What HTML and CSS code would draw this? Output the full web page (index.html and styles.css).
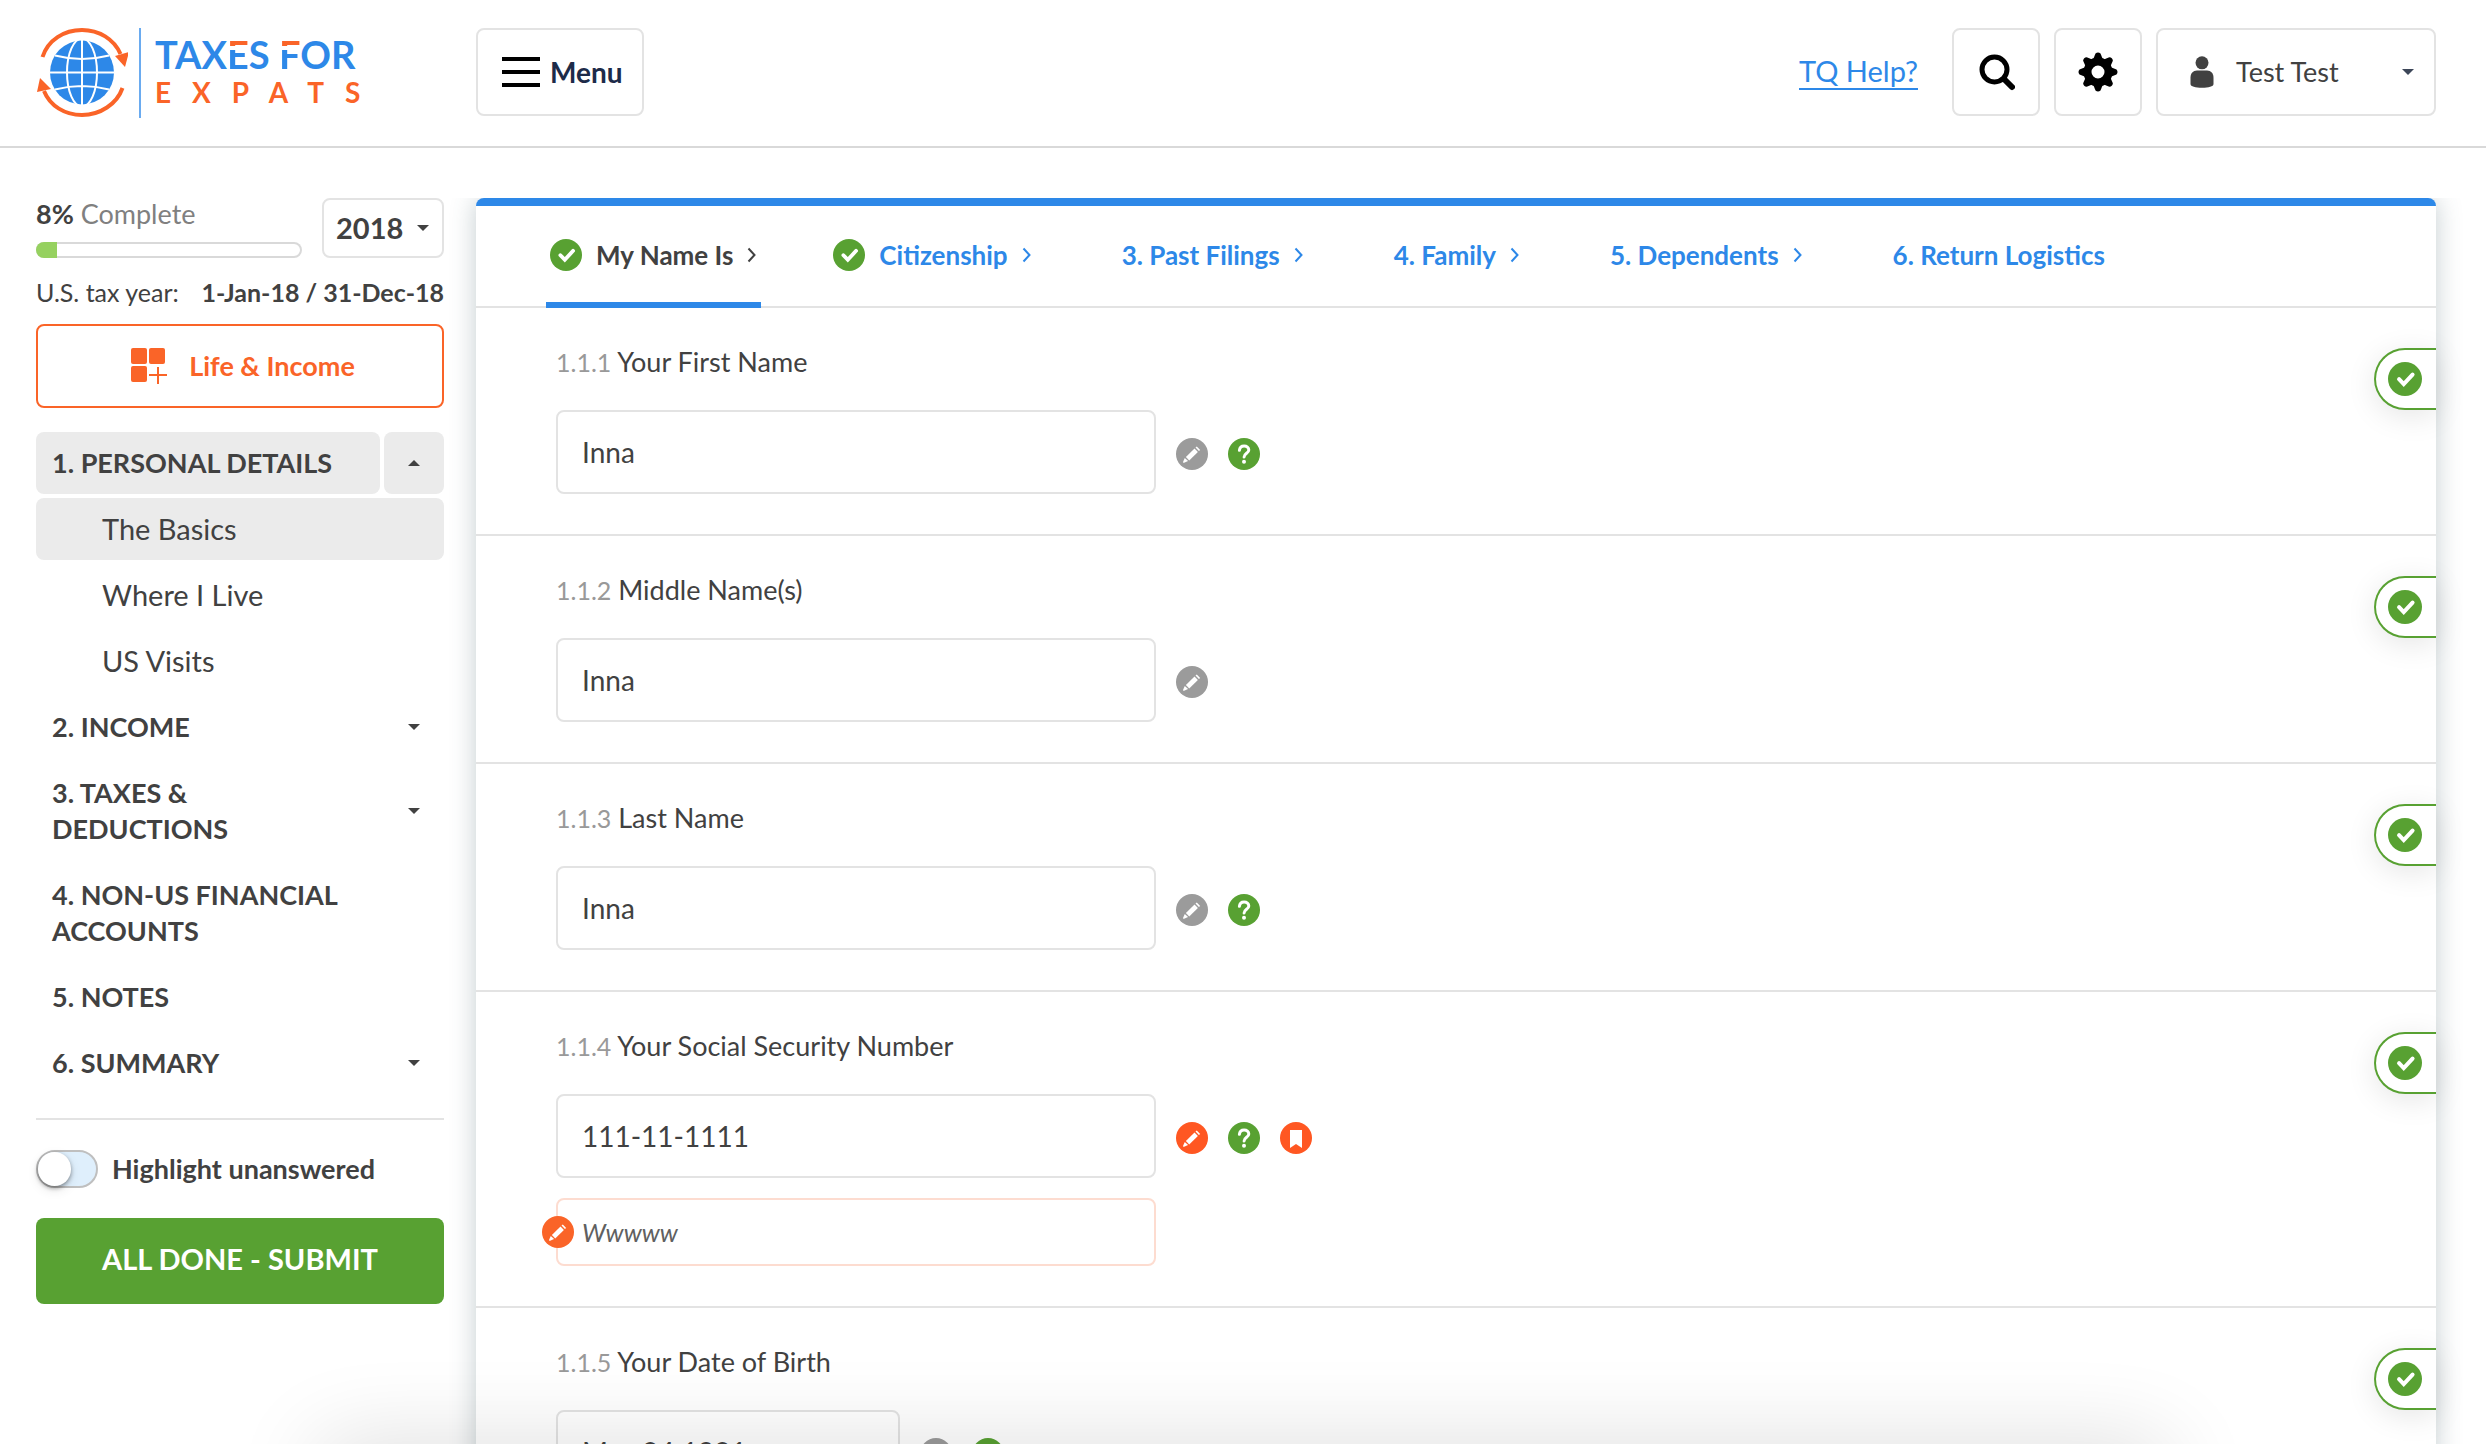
FILE: index.html
```html
<!DOCTYPE html>
<html lang="en">
<head>
<meta charset="utf-8">
<title>Taxes for Expats - The Basics</title>
<meta name="viewport" content="width=device-width, initial-scale=1">
<link rel="stylesheet" href="styles.css">
</head>
<body>
<svg class="sprite" aria-hidden="true">
  <symbol id="i-check" viewBox="0 0 32 32"><circle cx="16" cy="16" r="16" fill="#58a132"/><path d="M10.400 16.200l4.400 4.600 8.300-9" fill="none" stroke="#fff" stroke-width="3.800" stroke-linecap="round" stroke-linejoin="miter"/></symbol>
  <symbol id="i-pencil" viewBox="0 0 32 32"><circle cx="16" cy="16" r="16" fill="currentColor"/><g fill="#fff"><path d="M18.500 10.600l3.400 3.400-8.700 8.400-3.300-3.400z"/><path d="M19.500 9.600l1.300-1.200 3.400 3.500-1.300 1.200z"/><path d="M8.800 19.900l3.300 3.200-4 1.700c-.8.200-1.200-.3-1-1z"/></g></symbol>
  <symbol id="i-help" viewBox="0 0 32 32"><circle cx="16" cy="16" r="16" fill="#58a132"/><path d="M11.400 12.300c.3-2.900 2.200-4.300 4.700-4.300 2.700 0 4.700 1.500 4.700 4 0 3.300-4.500 3.300-4.700 7" fill="none" stroke="#fff" stroke-width="3" stroke-linecap="round"/><circle cx="16" cy="23.700" r="2" fill="#fff"/></symbol>
  <symbol id="i-bookmark" viewBox="0 0 32 32"><circle cx="16" cy="16" r="16" fill="currentColor"/><path d="M10 8h12v18l-6-4-6 4z" fill="#fff"/></symbol>
  <symbol id="i-next" viewBox="0 0 10 16"><path d="M1.500 1.500l6 6.500-6 6.500" fill="none" stroke="currentColor" stroke-width="2"/></symbol>
</svg>

<header class="topbar">
  <a class="logo" href="#" aria-label="Taxes for Expats">
    <svg class="logo-mark" viewBox="0 0 92 90" aria-hidden="true">
      <circle cx="46" cy="44.500" r="32" fill="#2d88e8"/>
      <g fill="none" stroke="#fff" stroke-width="2">
        <path d="M46 12v65M14 44.500h64M19 27.500q27 7 54 0M19 61.500q27-7 54 0"/>
        <ellipse cx="46" cy="44.500" rx="15" ry="34"/>
      </g>
      <g fill="none" stroke="#fa6428" stroke-width="4">
        <path d="M6.500 29C12 12 28 2 46 2c17 0 32 9 38.500 24"/>
        <path d="M86.500 60C81 76 64 87 46 87 29 87 14 78 8 63"/>
      </g>
      <path d="M79 28l14-4-4 15z" fill="#fa6428"/>
      <path d="M1 64l14-3-11-11z" fill="#fa6428"/>
    </svg>
    <span class="logo-text">
      <span class="logo-top">TAX<span class="cut">E</span>S <span class="cut">F</span>OR</span>
      <span class="logo-bottom">EXPATS</span>
    </span>
  </a>
  <button class="box-btn menu-btn" type="button">
    <svg width="38" height="30" viewBox="0 0 38 30" aria-hidden="true"><path d="M0 2h38M0 15h38M0 28h38" stroke="#000" stroke-width="4"/></svg>
    Menu
  </button>
  <nav class="tools" aria-label="Account">
    <a class="help-link" href="#">TQ Help?</a>
    <button class="box-btn icon-btn" type="button" aria-label="Search">
      <svg width="38" height="38" viewBox="-2 -1 38 38" aria-hidden="true"><circle cx="15.500" cy="15.500" r="12.500" fill="none" stroke="#000" stroke-width="5"/><path d="M25 25l8 8" stroke="#000" stroke-width="6" stroke-linecap="round"/></svg>
    </button>
    <button class="box-btn icon-btn" type="button" aria-label="Settings">
      <svg width="40" height="40" viewBox="0 0 40 40" aria-hidden="true"><g fill="#000"><g id="teeth"><path id="t" d="M14.500 9L17.500 1.500Q20-.5 22.500 1.500L25.500 9z"/><use href="#t" transform="rotate(45 20 20)"/><use href="#t" transform="rotate(90 20 20)"/><use href="#t" transform="rotate(135 20 20)"/></g><use href="#teeth" transform="rotate(180 20 20)"/></g><circle cx="20" cy="20" r="10.500" fill="none" stroke="#000" stroke-width="8"/></svg>
    </button>
    <button class="box-btn user-btn" type="button">
      <svg width="24" height="32" viewBox="0 0 24 32" aria-hidden="true"><g fill="#414141"><circle cx="12" cy="6.800" r="6.500"/><path d="M7 14.500h10c4 0 6.500 3 6.500 7V28c0 2.500-5 3.800-11.500 3.800S.5 30.500.5 28v-6.500c0-4 2.500-7 6.500-7z"/></g></svg>
      <span>Test Test</span>
      <i class="caret"></i>
    </button>
  </nav>
</header>

<div class="shell">
  <aside class="sidebar">
    <div class="status">
      <div class="progress-block">
        <div class="progress-label"><b>8%</b> Complete</div>
        <div class="progress" role="progressbar" aria-valuenow="8" aria-valuemin="0" aria-valuemax="100" aria-label="Complete"><div class="progress-fill" style="width: 8%"></div></div>
      </div>
      <div class="year">
        <select aria-label="Tax year"><option>2018</option></select>
        <i class="caret"></i>
      </div>
    </div>
    <p class="tax-year"><span>U.S. tax year:</span><b>1-Jan-18 / 31-Dec-18</b></p>
    <button class="life-btn" type="button">
      <svg width="36" height="36" viewBox="0 0 36 36" aria-hidden="true"><g fill="#fa6428"><rect width="16" height="16" rx="2"/><rect x="18" width="16" height="16" rx="2"/><rect y="18" width="16" height="16" rx="2"/></g><path d="M18 27h18M27 19v17" stroke="#fa6428" stroke-width="2"/></svg>
      Life &amp; Income
    </button>
    <nav class="menu" aria-label="Sections">
      <div class="menu-row open"><a href="#">1. PERSONAL DETAILS</a><button type="button" aria-label="Collapse"><i class="caret up"></i></button></div>
      <a class="sub current" href="#">The Basics</a>
      <a class="sub" href="#">Where I Live</a>
      <a class="sub" href="#">US Visits</a>
      <div class="menu-row"><a href="#">2. INCOME</a><button type="button" aria-label="Expand"><i class="caret"></i></button></div>
      <div class="menu-row"><a href="#">3. TAXES &amp;<br>DEDUCTIONS</a><button type="button" aria-label="Expand"><i class="caret"></i></button></div>
      <div class="menu-row"><a href="#">4. NON-US FINANCIAL<br>ACCOUNTS</a></div>
      <div class="menu-row"><a href="#">5. NOTES</a></div>
      <div class="menu-row"><a href="#">6. SUMMARY</a><button type="button" aria-label="Expand"><i class="caret"></i></button></div>
    </nav>
    <label class="switch"><input type="checkbox">Highlight unanswered</label>
    <button class="submit" type="button">ALL DONE - SUBMIT</button>
  </aside>

  <main class="scroller">
    <div class="panel">
      <nav class="tabs" aria-label="Steps">
        <a class="tab active" href="#"><svg class="dot"><use href="#i-check"/></svg>My Name Is<svg class="next"><use href="#i-next"/></svg></a>
        <a class="tab answered" href="#"><svg class="dot"><use href="#i-check"/></svg>Citizenship<svg class="next"><use href="#i-next"/></svg></a>
        <a class="tab" href="#">3. Past Filings<svg class="next"><use href="#i-next"/></svg></a>
        <a class="tab" href="#">4. Family<svg class="next"><use href="#i-next"/></svg></a>
        <a class="tab" href="#">5. Dependents<svg class="next"><use href="#i-next"/></svg></a>
        <a class="tab" href="#">6. Return Logistics</a>
      </nav>

      <section class="question">
        <label for="first"><span>1.1.1</span> Your First Name</label>
        <div class="answer">
          <input id="first" type="text" value="Inna">
          <button class="dot-btn" type="button" aria-label="Add note"><svg class="dot"><use href="#i-pencil"/></svg></button>
          <button class="dot-btn" type="button" aria-label="Help"><svg class="dot"><use href="#i-help"/></svg></button>
        </div>
        <div class="done"><svg><use href="#i-check"/></svg></div>
      </section>

      <section class="question">
        <label for="middle"><span>1.1.2</span> Middle Name(s)</label>
        <div class="answer">
          <input id="middle" type="text" value="Inna">
          <button class="dot-btn" type="button" aria-label="Add note"><svg class="dot"><use href="#i-pencil"/></svg></button>
        </div>
        <div class="done"><svg><use href="#i-check"/></svg></div>
      </section>

      <section class="question">
        <label for="last"><span>1.1.3</span> Last Name</label>
        <div class="answer">
          <input id="last" type="text" value="Inna">
          <button class="dot-btn" type="button" aria-label="Add note"><svg class="dot"><use href="#i-pencil"/></svg></button>
          <button class="dot-btn" type="button" aria-label="Help"><svg class="dot"><use href="#i-help"/></svg></button>
        </div>
        <div class="done"><svg><use href="#i-check"/></svg></div>
      </section>

      <section class="question">
        <label for="ssn"><span>1.1.4</span> Your Social Security Number</label>
        <div class="answer">
          <input id="ssn" type="text" value="111-11-1111">
          <button class="dot-btn hot" type="button" aria-label="Edit note"><svg class="dot"><use href="#i-pencil"/></svg></button>
          <button class="dot-btn" type="button" aria-label="Help"><svg class="dot"><use href="#i-help"/></svg></button>
          <button class="dot-btn hot" type="button" aria-label="Bookmark"><svg class="dot"><use href="#i-bookmark"/></svg></button>
        </div>
        <div class="note"><svg class="dot"><use href="#i-pencil"/></svg>Wwwww</div>
        <div class="done"><svg><use href="#i-check"/></svg></div>
      </section>

      <section class="question">
        <label for="dob"><span>1.1.5</span> Your Date of Birth</label>
        <div class="answer">
          <input id="dob" class="short" type="text" value="May 24 1981">
          <button class="dot-btn" type="button" aria-label="Add note"><svg class="dot"><use href="#i-pencil"/></svg></button>
          <button class="dot-btn" type="button" aria-label="Help"><svg class="dot"><use href="#i-help"/></svg></button>
        </div>
        <div class="done"><svg><use href="#i-check"/></svg></div>
      </section>
    </div>
  </main>
</div>
<div class="bottom-shade"></div>
</body>
</html>
```
FILE: styles.css
```css
* { box-sizing: border-box; }
body {
  margin: 0;
  height: 100vh;
  display: flex;
  flex-direction: column;
  overflow: hidden;
  background: #fff;
  color: #414141;
  font-family: Lato, "Noto Sans", sans-serif;
  font-size: 27px;
  line-height: 36px;
}
a { color: inherit; text-decoration: none; }
button, input, select { font: inherit; color: inherit; margin: 0; }
button { cursor: pointer; background: none; border: 0; padding: 0; }
svg { display: block; flex: none; }
.sprite { position: absolute; width: 0; height: 0; }

.caret {
  flex: none;
  border: 6px solid transparent;
  border-top-color: currentColor;
  border-bottom: 0;
}
.caret.up { border-top: 0; border-bottom: 6px solid currentColor; }

/* Top bar */
.topbar {
  flex: none;
  display: flex;
  align-items: center;
  padding: 28px 50px 30px 36px;
  border-bottom: 2px solid #d9d9d9;
}
.logo { display: flex; width: 440px; height: 88px; }
.logo-mark { width: 92px; height: 90px; }
.logo-text {
  display: flex;
  flex-direction: column;
  margin-left: 11px;
  padding: 6px 0 0 14px;
  height: 90px;
  border-left: 2px solid #6aabf0;
  font-weight: 700;
}
.logo-top { font-size: 38px; line-height: 40px; color: #2d88e8; white-space: nowrap; }
.logo-bottom { font-size: 28px; line-height: 36px; color: #fa6428; letter-spacing: 21px; }
.cut {
  color: transparent;
  background: linear-gradient(#fa6428 15px, transparent 15px, transparent 19px, #2d88e8 19px);
  background-clip: text;
  -webkit-background-clip: text;
}
.box-btn {
  display: flex;
  align-items: center;
  height: 88px;
  border: 2px solid #e3e3e3;
  border-radius: 8px;
}
.menu-btn { gap: 10px; padding: 0 19px 0 24px; font-size: 28px; font-weight: 700; color: #1d2b49; }
.tools { display: flex; align-items: center; gap: 14px; margin-left: auto; }
.help-link { margin-right: 20px; font-size: 29px; line-height: 34px; color: #2d88e8; border-bottom: 2px solid #2d88e8; }
.icon-btn { width: 88px; justify-content: center; }
.user-btn { width: 280px; padding: 0 20px 0 32px; gap: 22px; }
.user-btn .caret { margin-left: auto; color: #3c4658; }

/* Layout under the bar */
.shell { flex: 1; min-height: 0; display: flex; padding-top: 50px; }
.scroller { flex: 1; min-width: 0; overflow-y: auto; scrollbar-width: none; padding: 0 50px 50px 32px; }

/* Sidebar */
.sidebar { flex: none; width: 444px; padding-left: 36px; }
.status { display: flex; gap: 20px; height: 60px; }
.progress-block { flex: 1; display: flex; flex-direction: column; justify-content: space-between; }
.progress-label { line-height: 32px; color: #808080; }
.progress-label b { color: #414141; }
.progress { height: 16px; border-radius: 8px; overflow: hidden; box-shadow: inset 0 0 0 2px #d9d9d9; }
.progress-fill { height: 100%; background: #96d160; }
.year { position: relative; width: 122px; display: flex; align-items: center; }
.year select {
  width: 100%;
  height: 60px;
  padding: 0 0 0 12px;
  appearance: none;
  background: #fff;
  border: 2px solid #e3e3e3;
  border-radius: 8px;
  font-size: 29px;
  font-weight: 700;
}
.year .caret { position: absolute; right: 15px; }
.tax-year { display: flex; justify-content: space-between; margin: 16px 0 14px; font-size: 25px; white-space: nowrap; }
.life-btn {
  display: flex;
  align-items: center;
  justify-content: center;
  gap: 22px;
  width: 100%;
  height: 84px;
  padding-left: 6px;
  border: 2px solid #fa6428;
  border-radius: 8px;
  color: #fa6428;
  font-weight: 700;
}
.menu { display: flex; flex-direction: column; gap: 4px; margin-top: 24px; padding-bottom: 24px; border-bottom: 2px solid #e3e3e3; }
.menu-row { display: flex; gap: 4px; font-weight: 700; }
.menu-row a { flex: 1; padding: 13px 0 13px 16px; border-radius: 8px; }
.menu-row button { width: 60px; border-radius: 8px; display: flex; align-items: center; justify-content: center; }
.menu-row.open > *, .sub.current { background: #ebebeb; }
.sub { padding: 13px 0 13px 66px; border-radius: 8px; font-size: 29px; }
.switch { display: flex; align-items: center; gap: 14px; height: 38px; margin: 30px 0; font-weight: 700; }
.switch input {
  appearance: none;
  display: flex;
  width: 62px;
  height: 38px;
  margin: 0;
  border: 2px solid #bfbfbf;
  border-radius: 19px;
  background: #dfeffc;
}
.switch input::before {
  content: "";
  width: 33px;
  height: 34px;
  border-radius: 17px;
  background: #fff;
  box-shadow: 0 2px 4px rgba(0, 0, 0, .4), 0 4px 12px rgba(0, 0, 0, .1);
}
.switch input:checked { justify-content: flex-end; }
.submit { width: 100%; height: 86px; padding-bottom: 4px; border-radius: 8px; background: #58a132; color: #fff; font-size: 29px; font-weight: 700; }

/* Questionnaire */
.panel {
  background: #fff;
  border-top: 8px solid #2d88e8;
  border-radius: 8px;
  box-shadow: 0 0 26px rgba(60, 90, 100, .3);
}
.tabs { display: flex; gap: 82px; height: 102px; padding-left: 70px; border-bottom: 2px solid #e3e3e3; }
.tab {
  display: flex;
  align-items: center;
  height: 102px;
  padding: 0 4px 4px;
  color: #2d88e8;
  font-size: 26px;
  font-weight: 700;
  white-space: nowrap;
}
.tab.active { color: #414141; box-shadow: inset 0 -6px #2d88e8; }
.tab.answered { margin-left: -14px; }
.dot { width: 32px; height: 32px; }
.tab .dot { margin-right: 14px; }
.next { width: 10px; height: 16px; margin-left: 14px; }
.question { position: relative; padding: 36px 80px 40px; border-bottom: 2px solid #e3e3e3; }
.question label { display: block; margin-bottom: 30px; }
.question label span { color: #999; font-size: 25px; }
.answer { display: flex; align-items: center; gap: 20px; }
.answer input {
  width: 600px;
  height: 84px;
  padding: 0 24px;
  border: 2px solid #e3e3e3;
  border-radius: 8px;
  background: #fff;
  font-size: 28px;
}
.answer input.short { width: 344px; }
.dot-btn { margin-top: 4px; color: #9b9b9b; }
.dot-btn.hot { color: #ff5722; }
.note {
  display: flex;
  align-items: center;
  gap: 8px;
  width: 600px;
  height: 68px;
  margin-top: 20px;
  border: 2px solid #fddcd0;
  border-radius: 8px;
  color: #606060;
  font-size: 25px;
  font-style: italic;
}
.note .dot { margin-left: -16px; color: #fa6428; }
.done {
  position: absolute;
  top: 40px;
  right: 0;
  display: flex;
  align-items: center;
  width: 62px;
  height: 62px;
  padding-left: 12px;
  border: 2px solid #58a132;
  border-right: 0;
  border-radius: 31px 0 0 31px;
  background: #fff;
  box-shadow: 0 6px 30px rgba(0, 0, 0, .1);
}
.done svg { width: 34px; height: 34px; }

/* Soft shade rising from the lower edge of the window */
.bottom-shade {
  position: fixed;
  left: 320px;
  right: 320px;
  top: 100%;
  height: 80px;
  box-shadow: 0 0 90px rgba(0, 0, 0, .14);
  pointer-events: none;
}
```
